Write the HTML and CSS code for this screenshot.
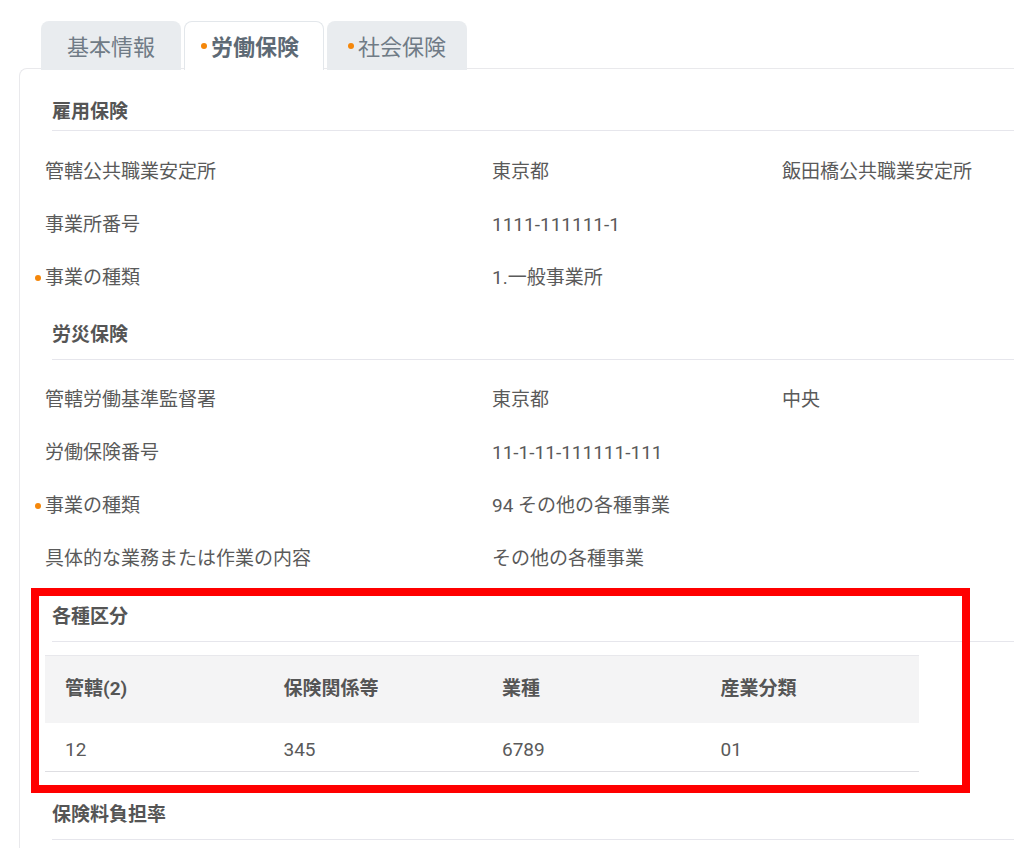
FILE: index.html
```html
<!DOCTYPE html>
<html lang="ja">
<head>
<meta charset="utf-8">
<title>労働保険</title>
<link rel="stylesheet" href="styles.css">
</head>
<body>
<div class="page">
  <div class="tabs">
    <div class="tab">基本情報</div>
    <div class="tab tab-active"><span class="dot"></span>労働保険</div>
    <div class="tab"><span class="dot"></span>社会保険</div>
  </div>
  <div class="card">
    <div class="section-title first">雇用保険</div>
    <div class="rows rows-first">
      <div class="row"><div class="label">管轄公共職業安定所</div><div class="value">東京都</div><div class="extra">飯田橋公共職業安定所</div></div>
      <div class="row"><div class="label">事業所番号</div><div class="value">1111-111111-1</div><div class="extra"></div></div>
      <div class="row"><div class="label"><span class="dot"></span>事業の種類</div><div class="value">1.一般事業所</div><div class="extra"></div></div>
    </div>
    <div class="section-title second">労災保険</div>
    <div class="rows">
      <div class="row"><div class="label">管轄労働基準監督署</div><div class="value">東京都</div><div class="extra">中央</div></div>
      <div class="row"><div class="label">労働保険番号</div><div class="value">11-1-11-111111-111</div><div class="extra"></div></div>
      <div class="row"><div class="label"><span class="dot"></span>事業の種類</div><div class="value">94 その他の各種事業</div><div class="extra"></div></div>
      <div class="row"><div class="label">具体的な業務または作業の内容</div><div class="value">その他の各種事業</div><div class="extra"></div></div>
    </div>
    <div class="section-title">各種区分</div>
    <table class="grid">
      <thead>
        <tr><th>管轄(2)</th><th>保険関係等</th><th>業種</th><th>産業分類</th></tr>
      </thead>
      <tbody>
        <tr><td>12</td><td>345</td><td>6789</td><td>01</td></tr>
      </tbody>
    </table>
    <div class="section-title last">保険料負担率</div>
  </div>
  <div class="highlight"></div>
</div>
</body>
</html>
```
FILE: styles.css
```css
html, body {
  margin: 0;
  padding: 0;
  background: #ffffff;
}
body {
  font-family: Roboto, "Noto Sans CJK JP", sans-serif;
  color: #5a5a5a;
  overflow: hidden;
  height: 848px;
}
.page {
  position: relative;
  width: 1031px;
  height: 848px;
  padding-top: 21px;
  box-sizing: border-box;
}
.tabs {
  display: flex;
  gap: 3px;
  margin-left: 41px;
  position: relative;
  z-index: 1;
  height: 49px;
}
.tab {
  width: 140px;
  height: 49px;
  box-sizing: border-box;
  background: #e9ecef;
  border-radius: 8px 8px 0 0;
  display: flex;
  align-items: center;
  justify-content: center;
  font-size: 22px;
  color: #707b86;
  padding-bottom: 2px;
}
.tab-active {
  background: #ffffff;
  border: 1px solid #e3e7eb;
  border-bottom: none;
  font-weight: 700;
  color: #5e6a75;
  padding-right: 8px;
}
.dot {
  display: inline-block;
  width: 6px;
  height: 6px;
  border-radius: 50%;
  background: #f5870a;
  margin-right: 4px;
  vertical-align: middle;
}
.tab .dot {
  margin-top: 2px;
}
.card {
  margin-top: -2px;
  margin-left: 19px;
  width: 995px;
  height: 800px;
  box-sizing: border-box;
  border-top: 1px solid #e9e9ec;
  border-left: 1px solid #e9e9ec;
  border-top-left-radius: 8px;
  padding: 30px 0 0 25px;
  overflow: hidden;
}
.section-title {
  margin-left: 7px;
  margin-top: 19px;
  font-size: 19px;
  line-height: 26px;
  font-weight: 700;
  color: #555555;
  padding-bottom: 11px;
  border-bottom: 1px solid #e6e6ec;
}
.section-title.first {
  margin-top: 0;
  padding-bottom: 5px;
}
.section-title.second {
  margin-top: 18px;
}
.section-title.last {
  margin-top: 30px;
}
.rows {
  padding-top: 13px;
}
.rows.rows-first {
  padding-top: 14px;
}
.row {
  display: grid;
  grid-template-columns: 447px 290px 1fr;
  font-size: 19px;
  line-height: 26px;
  padding: 13.5px 0;
}
.label .dot {
  margin-left: -10px;
  margin-top: 0;
}
.grid {
  margin-top: 13px;
  width: 874px;
  border-collapse: collapse;
  table-layout: fixed;
  font-size: 19px;
}
.grid th {
  text-align: left;
  font-weight: 700;
  color: #555555;
  background: #f4f4f5;
  border-top: 1px solid #e8e8ec;
  height: 67px;
  padding: 0 0 0 20px;
  line-height: 26px;
  box-sizing: border-box;
}
.grid td {
  padding: 14px 0 8px 20px;
  line-height: 26px;
  border-bottom: 1px solid #dedee2;
  color: #5a5a5a;
}
.highlight {
  position: absolute;
  left: 31px;
  top: 588px;
  width: 939px;
  height: 205px;
  box-sizing: border-box;
  border: 8px solid #ff0000;
  pointer-events: none;
}
```
